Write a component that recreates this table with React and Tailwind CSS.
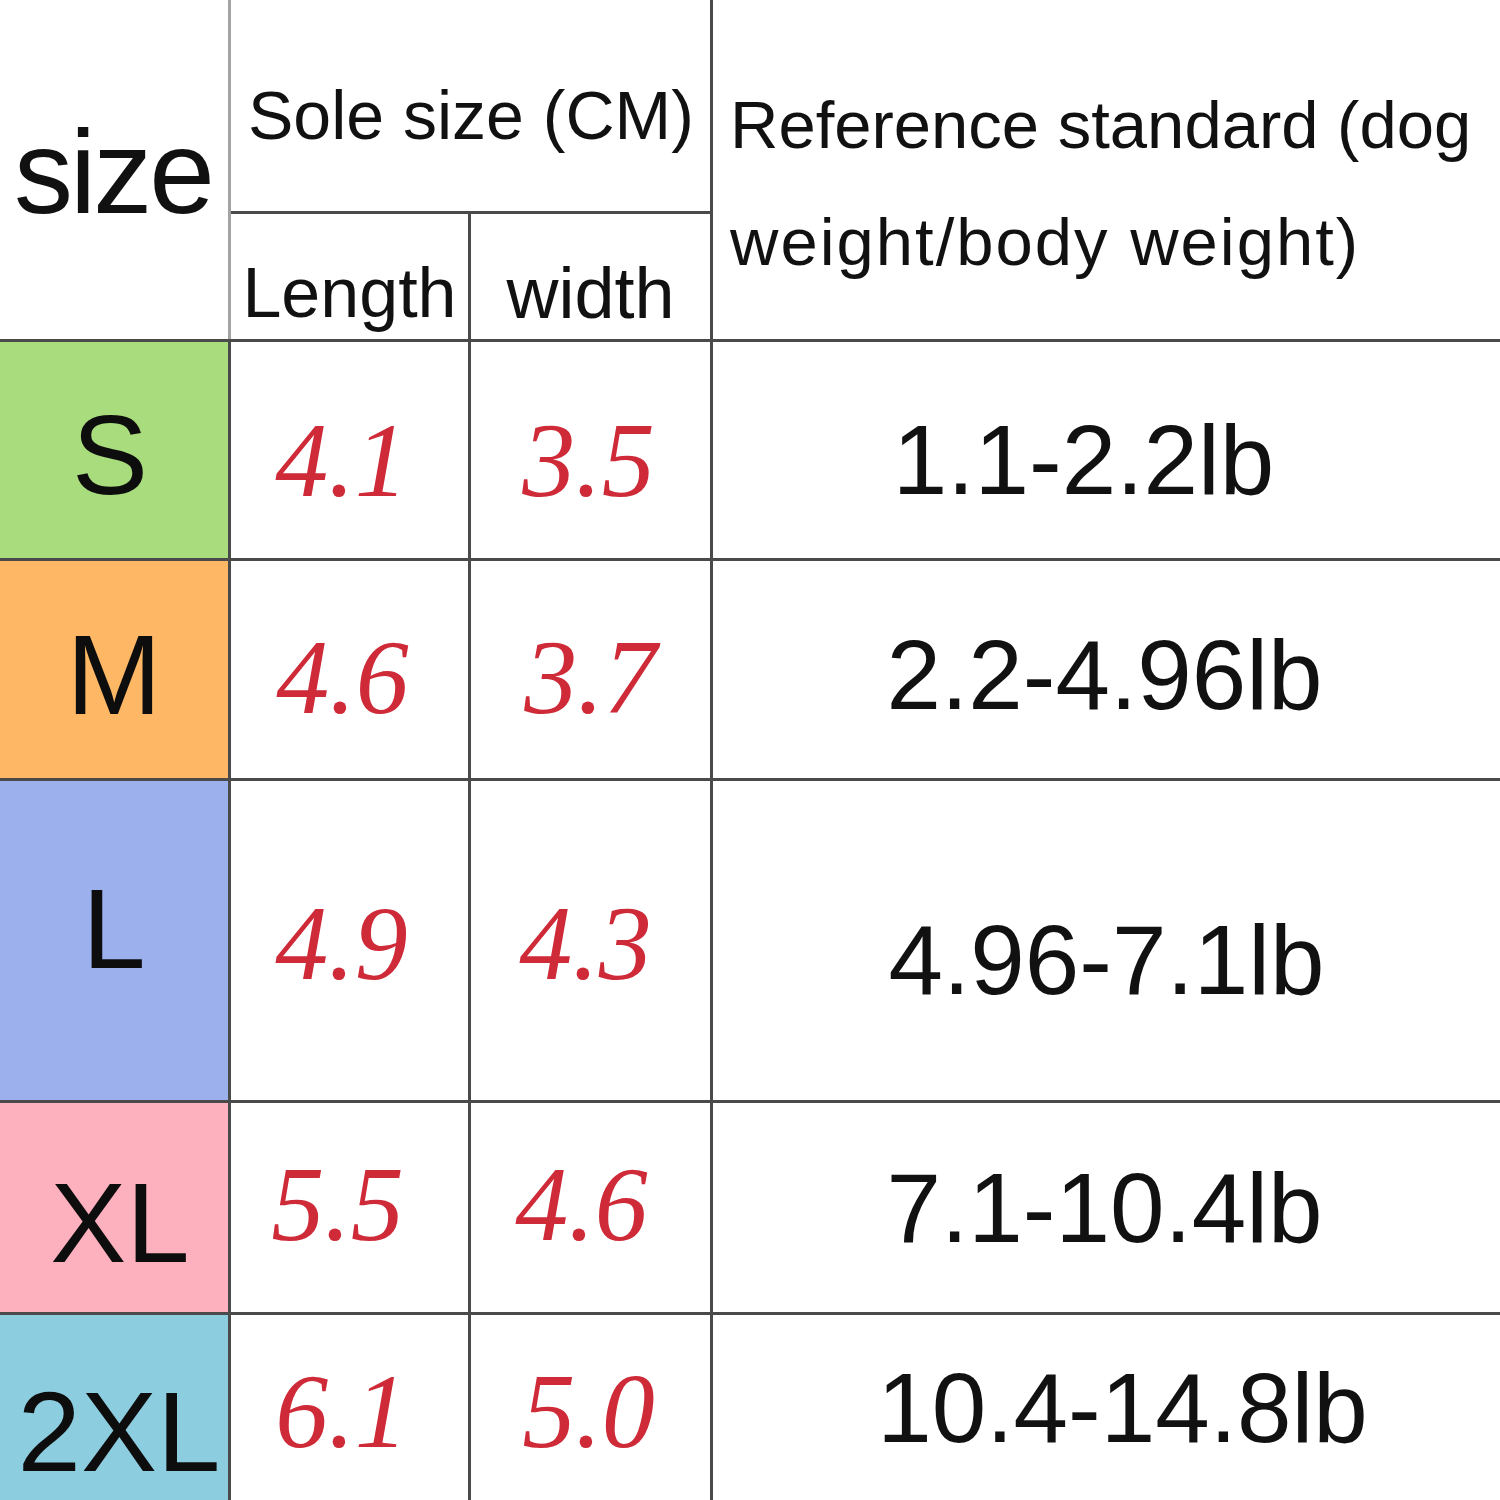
import React from "react";

const sans = "font-['Liberation_Sans',Arial,sans-serif]";
const serif = "font-['Liberation_Serif','Times_New_Roman',serif]";

const rows = [
  {
    size: "S",
    bg: "bg-[#a8dc7c]",
    sizePad: "pt-[10px] pr-[8px]",
    length: "4.1",
    lenPad: "pt-[22px] pr-[16px]",
    width: "3.5",
    widPad: "pt-[22px] pr-[4px]",
    weight: "1.1-2.2lb",
    wPad: "pt-[20px] pr-[46px]",
  },
  {
    size: "M",
    bg: "bg-[#fdb765]",
    sizePad: "pt-[10px]",
    length: "4.6",
    lenPad: "pt-[16px] pr-[14px]",
    width: "3.7",
    widPad: "pt-[16px]",
    weight: "2.2-4.96lb",
    wPad: "pt-[10px] pr-[4px]",
  },
  {
    size: "L",
    bg: "bg-[#9bb0ec]",
    sizePad: "pb-[24px]",
    length: "4.9",
    lenPad: "pt-[6px] pr-[16px]",
    width: "4.3",
    widPad: "pt-[6px] pr-[10px]",
    weight: "4.96-7.1lb",
    wPad: "pt-[38px]",
  },
  {
    size: "XL",
    bg: "bg-[#fdb0bd]",
    sizePad: "pt-[30px] pl-[12px]",
    length: "5.5",
    lenPad: "pb-[6px] pr-[24px]",
    width: "4.6",
    widPad: "pb-[6px] pr-[18px]",
    weight: "7.1-10.4lb",
    wPad: "pr-[4px]",
  },
  {
    size: "2XL",
    bg: "bg-[#8dcde0]",
    sizePad: "pt-[48px] pl-[10px]",
    length: "6.1",
    lenPad: "pt-[8px] pr-[16px]",
    width: "5.0",
    widPad: "pt-[8px] pr-[4px]",
    weight: "10.4-14.8lb",
    wPad: "pl-[32px]",
  },
];

export default function App() {
  return (
    <div className="w-[1500px] h-[1500px] overflow-hidden bg-white">
      <div className="grid grid-cols-[228px_237px_239px_787px] grid-rows-[211px_125px_216px_217px_319px_209px_185px] gap-[3px] bg-[#4a4a4a] w-[1500px] h-[1500px]">
        {/* header */}
        <div
          className={`row-span-2 bg-white flex items-center pl-[14px] pt-[4px] mr-[-3px] border-r-[3px] border-[#a3a3a3] text-[118px] leading-none tracking-[-3px] text-[#111] ${sans}`}
        >
          size
        </div>
        <div
          className={`col-span-2 bg-white flex items-center pl-[17px] pt-[18px] text-[68px] leading-none text-[#111] ${sans}`}
        >
          Sole size (CM)
        </div>
        <div
          className={`row-span-2 bg-white pl-[17px] pt-[66px] text-[67px] leading-[117px] text-[#111] ${sans}`}
        >
          Reference standard (dog
          <br />
          <span className="tracking-[2px]">weight/body weight)</span>
        </div>
        <div
          className={`bg-white flex items-center justify-center pt-[32px] text-[70px] leading-none text-[#111] ${sans}`}
        >
          Length
        </div>
        <div
          className={`bg-white flex items-center justify-center pt-[32px] text-[72px] leading-none text-[#111] ${sans}`}
        >
          width
        </div>

        {rows.map((r) => (
          <React.Fragment key={r.size}>
            <div
              className={`${r.bg} ${r.sizePad} flex items-center justify-center text-[114px] leading-none text-[#0d0d0d] ${sans}`}
            >
              {r.size}
            </div>
            <div
              className={`bg-white ${r.lenPad} flex items-center justify-center italic text-[106px] leading-none text-[#cf2a38] ${serif}`}
            >
              {r.length}
            </div>
            <div
              className={`bg-white ${r.widPad} flex items-center justify-center italic text-[106px] leading-none text-[#cf2a38] ${serif}`}
            >
              {r.width}
            </div>
            <div
              className={`bg-white ${r.wPad} flex items-center justify-center text-[98px] leading-none text-[#111] ${sans}`}
            >
              {r.weight}
            </div>
          </React.Fragment>
        ))}
      </div>
    </div>
  );
}
